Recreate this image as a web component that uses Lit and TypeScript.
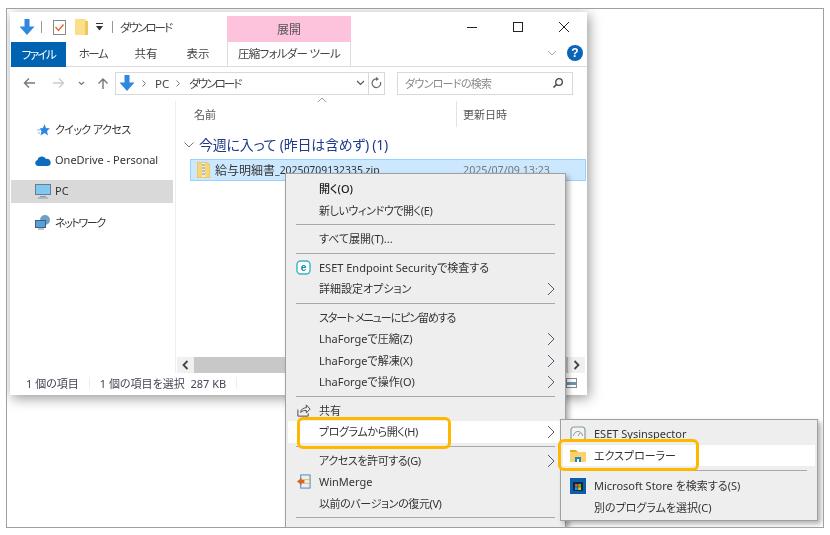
import { LitElement, html, css } from "lit";
import { customElement } from "lit/decorators.js";

const arrowDown = (s: number) => html`<svg class="ad" width=${s} height=${s} viewBox="0 0 16 16"><path d="M5.500 0h5v7.500H15.500L8 16 .5 7.500H5.500z" fill="#2f88dd"/></svg>`;
const chev = html`<svg class="chev" width="8" height="14" viewBox="0 0 8 14"><path d="M1 1l6 6-6 6" fill="none" stroke="#4a5a70" stroke-width="1"/></svg>`;
const crumb = html`<svg class="crumb" width="4" height="7" viewBox="0 0 4 7"><path d="M.5.5l3 3-3 3" fill="none" stroke="#777"/></svg>`;

@customElement("app-root")
export class AppRoot extends LitElement {
  static styles = css`
    :host { display: block; width: 830px; height: 535px; background: #fff; overflow: hidden; font-family: "Noto Sans", "Noto Sans CJK JP", sans-serif; font-size: 11px; color: #333; font-feature-settings: "palt"; }
    .stage { position: relative; width: 830px; height: 535px; filter: blur(0.4px); }
    .frame { position: absolute; left: 6px; top: 8px; width: 816px; height: 518px; border: 1px solid #a0a0a0; overflow: hidden; background: #fff; }
    .win { position: absolute; left: 3px; top: 3px; width: 577px; height: 383px; background: #fff; box-shadow: 2px 3px 12px rgba(0,0,0,.42); display: flex; flex-direction: column; }
    .title { height: 30px; display: flex; align-items: center; position: relative; padding-left: 9px; flex: none; }
    .title > svg { flex: none; }
    .vbar { width: 1px; height: 12px; background: #999; flex: none; }
    .v1 { margin: 0 11px 0 6px; }
    .qa-folder { margin-left: 9px; }
    .qa-drop { margin: 0 9px 0 8px; }
    .ttext { font-size: 11.5px; color: #444; margin-left: 7px; letter-spacing: -1.900px; }
    .pink { position: absolute; left: 217px; top: 4px; width: 124px; height: 26px; background: #fdc3dc; display: flex; align-items: center; justify-content: center; font-size: 12px; color: #555; }
    .wbtns { position: absolute; right: 0; top: 4px; display: flex; }
    .wbtn { width: 46px; height: 22px; display: flex; align-items: center; justify-content: center; }
    .tabs { height: 24px; display: flex; align-items: stretch; border-bottom: 1px solid #dcdcdc; position: relative; flex: none; padding-left: 1px; font-size: 11.5px; color: #444; }
    .tab { display: flex; align-items: center; justify-content: center; width: 54px; padding-bottom: 2px; box-sizing: border-box; }
    .tab.kana { letter-spacing: -1.500px; }
    .tab.tfile { width: 55px; background: #0063b1; color: #fff; margin-bottom: -1px; }
    .tab.t2, .tab.t3 { width: 52px; }
    .tab.tool { width: 124px; margin-left: 3px; border: solid #dcdcdc; border-width: 0 1px; background: #fff; letter-spacing: -.7px; }
    .ribr { position: absolute; right: 4px; top: 3px; display: flex; align-items: center; gap: 10px; }
    .help { width: 16px; height: 16px; border-radius: 50%; background: #0a64b8; color: #fff; font: bold 12px/16px "Liberation Sans", sans-serif; text-align: center; }
    .addr { height: 34px; display: flex; align-items: center; flex: none; padding-left: 13px; padding-bottom: 2px; box-sizing: border-box; }
    .nav { display: flex; align-items: center; width: 92px; color: #777; flex: none; }
    .n2 { margin-left: 16px; }
    .n3 { margin-left: 13px; }
    .n4 { margin-left: 12px; }
    .abox { width: 254px; height: 23px; border: 1px solid #d9d9d9; display: flex; align-items: center; box-sizing: border-box; padding-left: 3px; flex: none; font-size: 11.5px; color: #444; }
    .crumb { margin: 0 9px 0 7px; flex: none; }
    .abox .dl { letter-spacing: -1.900px; }
    .ref { width: 16px; height: 23px; border: 1px solid #d9d9d9; border-left: 0; display: flex; align-items: center; justify-content: center; flex: none; box-sizing: border-box; }
    .abox .dd { margin-left: auto; margin-right: 3px; }
    .search { width: 176px; height: 23px; margin-left: 12px; border: 1px solid #d9d9d9; display: flex; align-items: center; justify-content: space-between; padding: 0 8px 0 7px; flex: none; font-size: 11px; color: #888; box-sizing: border-box; }
    .search span { letter-spacing: -.7px; }
    .body { flex: 1; display: flex; min-height: 0; }
    .side { width: 165px; border-right: 1px solid #eee; flex: none; padding-top: 17px; box-sizing: border-box; margin-left: 1px; }
    .nitem { height: 23px; display: flex; align-items: center; gap: 4px; padding-left: 24px; margin-bottom: 8px; margin-right: 2px; color: #333; font-size: 11px; }
    .nitem svg { width: 16px; flex: none; }
    .nitem span { margin-top: -2px; }
    .nitem span.q { letter-spacing: -.6px; }
    .nitem span.k { letter-spacing: -1.400px; }
    .nitem.sel { background: #d9d9d9; }
    .main { flex: 1; position: relative; display: flex; flex-direction: column; min-width: 0; }
    .chead { height: 26px; display: flex; align-items: center; position: relative; padding-left: 18px; color: #555; flex: none; }
    .chead > div { padding-bottom: 1px; box-sizing: border-box; }
    .cname { width: 262px; position: relative; }
    .caret { position: absolute; left: 123px; top: -9px; }
    .cdate { border-left: 1px solid #e3e3e3; height: 26px; display: flex; align-items: center; padding-left: 6px; }
    .group { height: 24px; margin-top: 6px; display: flex; align-items: center; gap: 5px; padding-left: 8px; font-size: 14px; color: #1e3a8a; flex: none; }
    .group span { letter-spacing: -.25px; margin-top: -2px; }
    .frow { height: 20px; margin: 2px 1px 0 14px; background: #cce8ff; border: 1px solid #99d1ff; display: flex; align-items: center; padding-left: 6px; flex: none; color: #333; font-size: 12px; }
    .frow svg { margin-right: 5px; flex: none; }
    .frow .num { font-size: 10.4px; }
    .frow .d { margin-left: auto; margin-right: 35px; color: #777; font-size: 10.7px; }
    .hscroll { margin-top: auto; height: 16px; display: flex; background: #f0f0f0; margin-left: 1px; margin-right: 2px; align-items: center; flex: none; }
    .hscroll .th { flex: 1; background: #c8c8c8; height: 100%; }
    .hscroll svg { margin: 0 5px; flex: none; }
    .status { height: 22px; display: flex; align-items: center; flex: none; padding: 0 0 2px 16px; color: #445; font-size: 11px; position: relative; box-sizing: border-box; }
    .status i { width: 1px; height: 12px; background: #eee; margin: 0 10px; }
    .status .view { position: absolute; right: 10px; top: 5px; width: 11px; height: 10px; border: 1px solid #888; background: linear-gradient(#fff 35%, #6f93ad 35%, #6f93ad 75%, #fff 75%); box-sizing: border-box; }
    .menu { position: absolute; background: #eee; border: 1px solid #a0a0a0; box-shadow: 3px 3px 5px rgba(0,0,0,.3); box-sizing: border-box; font-size: 11px; color: #333; }
    .m1 { left: 278px; top: 164px; width: 281px; height: 360px; padding-top: 4px; }
    .m2 { left: 553px; top: 410px; width: 258px; height: 102px; padding-top: 3px; }
    .row { height: 21.500px; display: flex; align-items: center; padding-left: 33px; position: relative; }
    .row > span { margin-top: -1px; }
    .row > span.t1 { letter-spacing: -.4px; }
    .row > span.t2 { letter-spacing: -1.100px; }
    .row.b { font-weight: 500; color: #222; }
    .row .ic { position: absolute; left: 10px; top: 3px; width: 15px; height: 15px; }
    .row .chev { position: absolute; right: 10px; top: 4px; }
    .row.hi { background: #fff; margin-left: 2px; margin-right: 0; padding-left: 31px; }
    .hr { height: 1px; background: #a8a8a8; margin: 3px 10px; }
    .m2 .hr { margin: 4px 10px; }
    .m2 .row.hi { margin-right: 2px; padding-left: 31px; }
    .m2 .ic { left: 9px; width: 16px; height: 16px; }
    .m2 .row.hi .ic { left: 7px; }
    .call { position: absolute; border: 3px solid #ffb800; border-radius: 6px; box-sizing: border-box; }
    .c1 { left: 290px; top: 408px; width: 154px; height: 32px; }
    .c2 { left: 551px; top: 430px; width: 141px; height: 32px; }
  `;

  render() {
    return html`<div class="stage"><div class="frame">
      <div class="win">
        <div class="title">
          ${arrowDown(16)}
          <div class="vbar v1"></div>
          <svg width="13" height="15" viewBox="0 0 13 15"><rect x=".5" y=".5" width="12" height="14" fill="#fff" stroke="#888"/><path d="M2.500 7l3 3.500 5-6" fill="none" stroke="#e0642e" stroke-width="1.300"/></svg>
          <svg class="qa-folder" width="13" height="16" viewBox="0 0 13 16"><path d="M0 0h10l3 3v13H0z" fill="#fbdf8a"/><path d="M10 2h3v14h-3z" fill="#f2c75a"/></svg>
          <svg class="qa-drop" width="7" height="8" viewBox="0 0 7 8"><path d="M0 .5h7" stroke="#333"/><path d="M0 3h7L3.500 7.500z" fill="#333"/></svg>
          <div class="vbar"></div>
          <span class="ttext">ダウンロード</span>
          <div class="pink">展開</div>
          <div class="wbtns">
            <div class="wbtn"><svg width="10" height="10"><path d="M0 5.500h10" stroke="#222"/></svg></div>
            <div class="wbtn"><svg width="10" height="10"><rect x=".5" y=".5" width="9" height="9" fill="none" stroke="#222"/></svg></div>
            <div class="wbtn"><svg width="10" height="10"><path d="M0 0l10 10M10 0L0 10" stroke="#222"/></svg></div>
          </div>
        </div>
        <div class="tabs">
          <div class="tab tfile kana">ファイル</div>
          <div class="tab kana">ホーム</div>
          <div class="tab t2">共有</div>
          <div class="tab t3">表示</div>
          <div class="tab tool">圧縮フォルダー ツール</div>
          <div class="ribr"><svg width="10" height="6" viewBox="0 0 10 6"><path d="M1 1l4 4 4-4" fill="none" stroke="#aaa"/></svg><div class="help">?</div></div>
        </div>
        <div class="addr">
          <div class="nav">
            <svg width="13" height="12" viewBox="0 0 13 12"><path d="M12 6H2M6 1.500L1.500 6 6 10.500" fill="none" stroke="#777" stroke-width="1.400"/></svg>
            <svg class="n2" width="13" height="12" viewBox="0 0 13 12"><path d="M1 6h10M7 1.500L11.500 6 7 10.500" fill="none" stroke="#ccc" stroke-width="1.400"/></svg>
            <svg class="n3" width="7" height="5" viewBox="0 0 7 5"><path d="M1 1l2.500 2.500L6 1" fill="none" stroke="#777" stroke-width="1.200"/></svg>
            <svg class="n4" width="12" height="13" viewBox="0 0 12 13"><path d="M6 12V2M1.500 6.500L6 2l4.500 4.500" fill="none" stroke="#777" stroke-width="1.400"/></svg>
          </div>
          <div class="abox">
            ${arrowDown(16)}
            ${crumb}<span>PC</span>${crumb}<span class="dl">ダウンロード</span>
            <svg class="dd" width="9" height="6" viewBox="0 0 9 6"><path d="M1 1l3.500 3.500L8 1" fill="none" stroke="#555" stroke-width="1.200"/></svg>
          </div>
          <div class="ref"><svg width="11" height="12" viewBox="0 0 11 12"><path d="M9.500 5A4.300 4.300 0 1 1 6 2" fill="none" stroke="#666" stroke-width="1.200"/><path d="M5 0l3 2-3 2z" fill="#666"/></svg></div>
          <div class="search"><span>ダウンロードの検索</span><svg width="12" height="12" viewBox="0 0 12 12"><circle cx="7" cy="5" r="3.300" fill="none" stroke="#444" stroke-width="1.300"/><path d="M4.500 7.500L1.500 10.500" stroke="#444" stroke-width="1.600"/></svg></div>
        </div>
        <div class="body">
          <div class="side">
            <div class="nitem"><svg height="14" viewBox="0 0 16 14"><path d="M9.500 1l1.500 4 4 .5-3 2.500 1 4.500-3.500-2.500-4 2.500 1-4.500-2-2.500 3.500-.5z" fill="#2f88dd"/><path d="M2 7h3M3 10h2" stroke="#7fb5e8"/></svg><span class="q">クイック アクセス</span></div>
            <div class="nitem"><svg height="12" viewBox="0 0 16 12"><path d="M3 11a3 3 0 0 1-.5-5.900A4.500 4.500 0 0 1 11 4a3.500 3.500 0 0 1 2 7z" fill="#0f6cbd"/></svg><span>OneDrive - Personal</span></div>
            <div class="nitem sel"><svg height="15" viewBox="0 0 16 15"><rect x=".5" y=".5" width="15" height="10" fill="#7ec8f2" stroke="#6b7d8d"/><path d="M5 12.500h6M3 14h10" stroke="#8a97a5" stroke-width="1.200"/></svg><span>PC</span></div>
            <div class="nitem"><svg height="15" viewBox="0 0 16 15"><circle cx="10" cy="5" r="5" fill="#6fa0c8"/><rect x=".5" y="5.500" width="10" height="7" fill="#4ea5de" stroke="#557"/><path d="M3 14h6" stroke="#889"/></svg><span class="k">ネットワーク</span></div>
          </div>
          <div class="main">
            <div class="chead">
              <div class="cname">名前<svg class="caret" width="10" height="6" viewBox="0 0 10 6"><path d="M1 5l4-4 4 4" fill="none" stroke="#999"/></svg></div>
              <div class="cdate">更新日時</div>
            </div>
            <div class="group"><svg width="10" height="6" viewBox="0 0 10 6"><path d="M.500.500L5 5l4.500-4.500" fill="none" stroke="#777"/></svg><span>今週に入って (昨日は含めず) (1)</span></div>
            <div class="frow">
              <svg width="13" height="16" viewBox="0 0 13 16"><path d="M0 0h9l4 3v13H0z" fill="#f7d674" stroke="#c9a13a" stroke-width=".5"/><path d="M5 1h3v14H5z" fill="#eee"/><path d="M5 3h3M5 6h3M5 9h3M5 12h3" stroke="#888"/></svg>
              <span>給与明細書</span><span class="num">_20250709132335.zip</span><span class="d">2025/07/09 13:23</span>
            </div>
            <div class="hscroll">
              <svg width="7" height="10" viewBox="0 0 7 10"><path d="M5.500 1L1.500 5l4 4" fill="none" stroke="#444" stroke-width="1.800"/></svg>
              <div class="th"></div>
              <svg width="7" height="10" viewBox="0 0 7 10"><path d="M1.500 1l4 4-4 4" fill="none" stroke="#444" stroke-width="1.800"/></svg>
            </div>
          </div>
        </div>
        <div class="status"><span>1 個の項目</span><i></i><span>1 個の項目を選択&nbsp; 287 KB</span><i></i><div class="view"></div></div>
      </div>
      <div class="menu m1">
        <div class="row b"><span>開く(O)</span></div>
        <div class="row"><span class="t1">新しいウィンドウで開く(E)</span></div>
        <div class="hr"></div>
        <div class="row"><span>すべて展開(T)...</span></div>
        <div class="hr"></div>
        <div class="row"><svg class="ic" viewBox="0 0 16 16"><rect x="1" y="1" width="14" height="14" rx="4" fill="#fff" stroke="#3fb3c5" stroke-width="1.500"/><text x="8" y="12" font-size="11" font-weight="700" text-anchor="middle" fill="#0f8ea3" font-family="Liberation Sans">e</text></svg><span>ESET Endpoint Securityで検査する</span></div>
        <div class="row"><span>詳細設定オプション</span>${chev}</div>
        <div class="hr"></div>
        <div class="row"><span class="t2">スタート メニューにピン留めする</span></div>
        <div class="row"><span>LhaForgeで圧縮(Z)</span>${chev}</div>
        <div class="row"><span>LhaForgeで解凍(X)</span>${chev}</div>
        <div class="row"><span>LhaForgeで操作(O)</span>${chev}</div>
        <div class="hr"></div>
        <div class="row"><svg class="ic" viewBox="0 0 16 16"><path d="M2 7v7h11v-3M5 10c0-3 3-5 6-5V2l4 4.500-4 4V8c-2 0-4 0-6 2z" fill="none" stroke="#444"/></svg><span>共有</span></div>
        <div class="row hi"><span class="t1">プログラムから開く(H)</span>${chev}</div>
        <div class="hr"></div>
        <div class="row"><span class="t1">アクセスを許可する(G)</span>${chev}</div>
        <div class="row"><svg class="ic" viewBox="0 0 16 16"><rect x="5" y="1" width="10" height="14" fill="#e8f0f7" stroke="#4a7fae"/><path d="M5 6h10M5 10h10" stroke="#e8b84a"/><path d="M1 8l5-4v2.500h3v3H6V12z" fill="#d8662a"/></svg><span>WinMerge</span></div>
        <div class="row"><span class="t1">以前のバージョンの復元(V)</span></div>
        <div class="hr"></div>
      </div>
      <div class="menu m2">
        <div class="row"><svg class="ic" viewBox="0 0 16 16"><rect x="1" y="1" width="14" height="14" rx="3" fill="#f4f4f4" stroke="#8a9aa5" stroke-width="1.200"/><path d="M3.500 10a4.500 4.500 0 0 1 9 0M8 10l2-3" fill="none" stroke="#8a9aa5"/></svg><span>ESET Sysinspector</span></div>
        <div class="row hi"><svg class="ic" viewBox="0 0 16 16"><path d="M0 2h6l2 2H0z" fill="#e9a820"/><path d="M0 4h16v10H0z" fill="#fcd16a"/><path d="M5 9h6v5H5z" fill="#1a86d8"/><path d="M7 11h2v3H7z" fill="#fff"/></svg><span>エクスプローラー</span></div>
        <div class="hr"></div>
        <div class="row"><svg class="ic" viewBox="0 0 16 16"><rect width="16" height="16" fill="#0c5ea8"/><rect x="3" y="4" width="10" height="9" fill="#0a2a4a"/><rect x="5" y="6" width="2.800" height="2.800" fill="#f25022"/><rect x="8.200" y="6" width="2.800" height="2.800" fill="#7fba00"/><rect x="5" y="9.200" width="2.800" height="2.800" fill="#00a4ef"/><rect x="8.200" y="9.200" width="2.800" height="2.800" fill="#ffb900"/></svg><span>Microsoft Store を検索する(S)</span></div>
        <div class="row"><span>別のプログラムを選択(C)</span></div>
      </div>
      <div class="call c1"></div>
      <div class="call c2"></div>
    </div></div>`;
  }
}
